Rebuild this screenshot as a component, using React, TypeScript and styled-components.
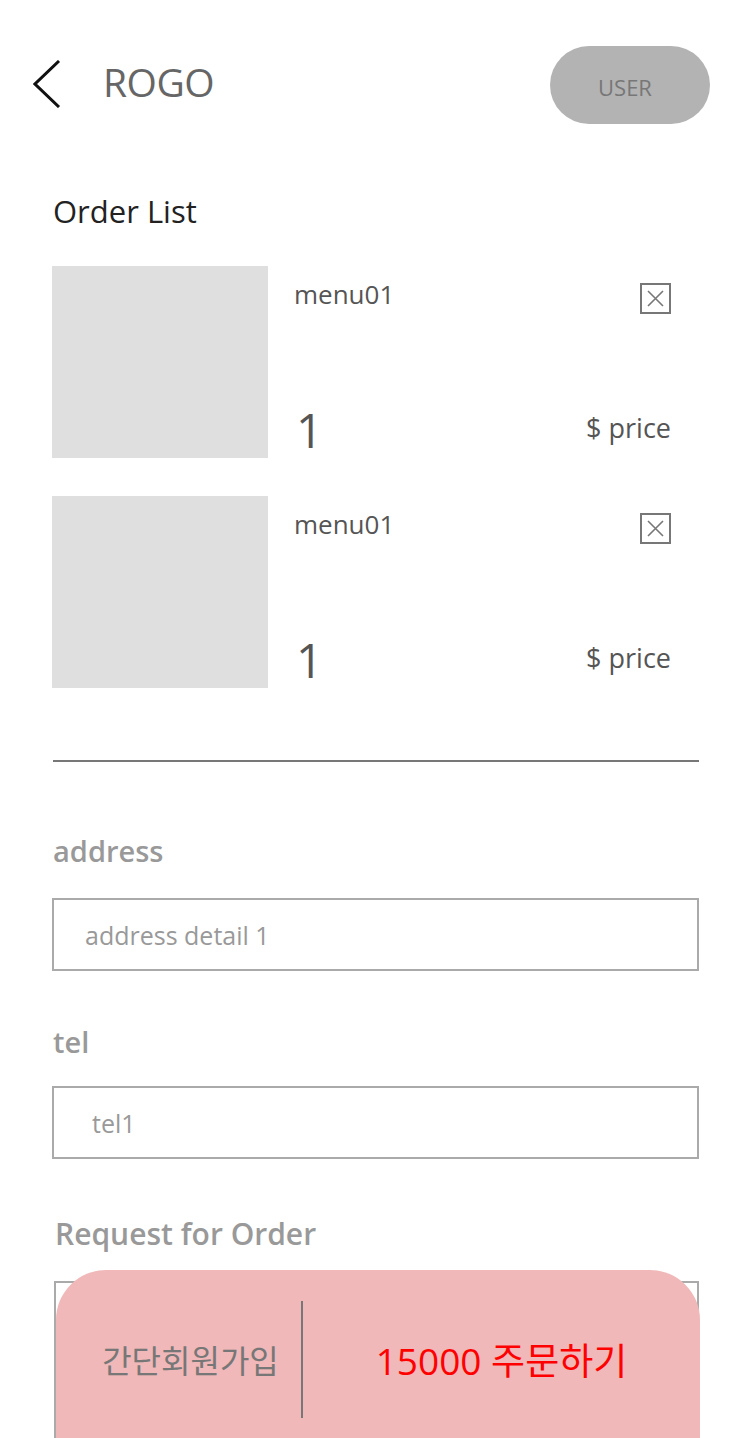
import React from "react";
import styled, { createGlobalStyle } from "styled-components";

const Global = createGlobalStyle`
  html, body { margin: 0; padding: 0; background: #fff; }
  body { font-family: "Open Sans", "Noto Sans CJK KR", sans-serif; }
  * { box-sizing: border-box; }
`;

const Page = styled.div`
  width: 750px;
  min-height: 1438px;
  position: relative;
  overflow: hidden;
`;

const Header = styled.header`
  display: flex;
  align-items: center;
  height: 78px;
  margin-top: 46px;
  padding: 0 40px 0 33px;
`;

const Back = styled.button`
  display: flex;
  align-items: center;
  border: 0;
  background: none;
  padding: 0;
  width: 28px;
  height: 48px;
  margin-top: -3px;
`;

const Logo = styled.div`
  margin: -8px 0 0 42px;
  font-size: 39px;
  line-height: 1;
  color: #666;
  letter-spacing: -0.5px;
`;

const UserButton = styled.button`
  margin-left: auto;
  width: 160px;
  height: 78px;
  border: 0;
  border-radius: 39px;
  background: #b3b3b3;
  color: #777;
  font-family: inherit;
  font-size: 22px;
  padding: 4px 10px 0 0;
`;

const Main = styled.main`
  padding: 0 51px 0 52px;
`;

const Title = styled.h2`
  margin: 67px 0 0 1px;
  font-size: 31px;
  line-height: 40px;
  font-weight: 400;
  color: #222;
`;

const List = styled.ul`
  list-style: none;
  margin: 35px 0 0;
  padding: 0;
  display: flex;
  flex-direction: column;
  gap: 38px;
`;

const Item = styled.li`
  display: flex;
  gap: 26px;
  height: 192px;
`;

const Thumb = styled.div`
  width: 216px;
  height: 192px;
  background: #dfdfdf;
`;

const Info = styled.div`
  width: 377px;
  display: flex;
  flex-direction: column;
  justify-content: space-between;
  padding: 13px 0 0;
`;

const Row = styled.div<{ $align?: string }>`
  display: flex;
  justify-content: space-between;
  align-items: ${(p) => p.$align || "center"};
`;

const Name = styled.span`
  font-size: 26px;
  line-height: 1.2;
  color: #555;
`;

const Close = styled.button`
  width: 31px;
  height: 31px;
  border: 2px solid #777;
  background: #fff;
  padding: 0;
  display: flex;
  align-items: center;
  justify-content: center;
  margin-top: 4px;
`;

const Qty = styled.span`
  font-size: 47px;
  line-height: 1.2;
  color: #555;
  padding-left: 2px;
`;

const Price = styled.span`
  font-size: 27px;
  line-height: 1.2;
  color: #555;
  padding-bottom: 14px;
`;

const Divider = styled.hr`
  margin: 72px 0 0 1px;
  border: 0;
  border-top: 2px solid #777;
`;

const Field = styled.div`
  display: flex;
  flex-direction: column;
`;

const Label = styled.label<{ $mt: number; $ml?: number; $size?: number }>`
  font-size: ${(p) => p.$size || 29}px;
  font-weight: 600;
  color: #999;
  line-height: 38px;
  margin: ${(p) => p.$mt}px 0 0 ${(p) => p.$ml || 1}px;
`;

const Input = styled.div<{ $pl: number; $mt: number }>`
  margin-top: ${(p) => p.$mt}px;
  height: 73px;
  border: 2px solid #aaa;
  display: flex;
  align-items: center;
  padding-left: ${(p) => p.$pl}px;
  font-size: 25px;
  color: #999;
`;

const TextArea = styled.div`
  margin: 28px 0 0 2px;
  height: 200px;
  border: 2px solid #aaa;
`;

const OrderBar = styled.div`
  position: absolute;
  left: 56px;
  top: 1270px;
  width: 644px;
  height: 180px;
  border-radius: 50px 50px 0 0;
  background: #f0b8b8;
  display: flex;
  align-items: center;
  padding-bottom: 2px;
`;

const JoinBtn = styled.button`
  width: 247px;
  height: 117px;
  border: 0;
  border-right: 2px solid #777;
  background: none;
  font-family: "Noto Sans CJK KR", sans-serif;
  font-size: 32px;
  color: #777;
  padding: 0 0 0 24px;
`;

const OrderBtn = styled.button`
  flex: 1;
  border: 0;
  background: none;
  font-family: "Open Sans", "Noto Sans CJK KR", sans-serif;
  font-size: 37px;
  color: #ff0000;
  padding-right: 6px;
`;

const items = [
  { name: "menu01", qty: 1 },
  { name: "menu01", qty: 1 },
];

export default function App() {
  return (
    <Page>
      <Global />
      <Header>
        <Back aria-label="back">
          <svg width="28" height="48" viewBox="0 0 28 48">
            <polyline points="26,1 2,24 26,47" fill="none" stroke="#111" strokeWidth="3" />
          </svg>
        </Back>
        <Logo>ROGO</Logo>
        <UserButton>USER</UserButton>
      </Header>
      <Main>
        <Title>Order List</Title>
        <List>
          {items.map((it, i) => (
            <Item key={i}>
              <Thumb />
              <Info>
                <Row $align="flex-start">
                  <Name>{it.name}</Name>
                  <Close aria-label="remove">
                    <svg width="17" height="17" viewBox="0 0 17 17">
                      <path d="M1 1L16 16M16 1L1 16" stroke="#777" strokeWidth="1.6" />
                    </svg>
                  </Close>
                </Row>
                <Row $align="flex-end">
                  <Qty>{it.qty}</Qty>
                  <Price>$ price</Price>
                </Row>
              </Info>
            </Item>
          ))}
        </List>
        <Divider />
        <Field>
          <Label $mt={70}>address</Label>
          <Input $pl={31} $mt={28}>address detail 1</Input>
        </Field>
        <Field>
          <Label $mt={52}>tel</Label>
          <Input $pl={38} $mt={25}>tel1</Input>
        </Field>
        <Field>
          <Label $mt={56} $ml={3} $size={30}>Request for Order</Label>
          <TextArea />
        </Field>
      </Main>
      <OrderBar>
        <JoinBtn>간단회원가입</JoinBtn>
        <OrderBtn>15000 주문하기</OrderBtn>
      </OrderBar>
    </Page>
  );
}
